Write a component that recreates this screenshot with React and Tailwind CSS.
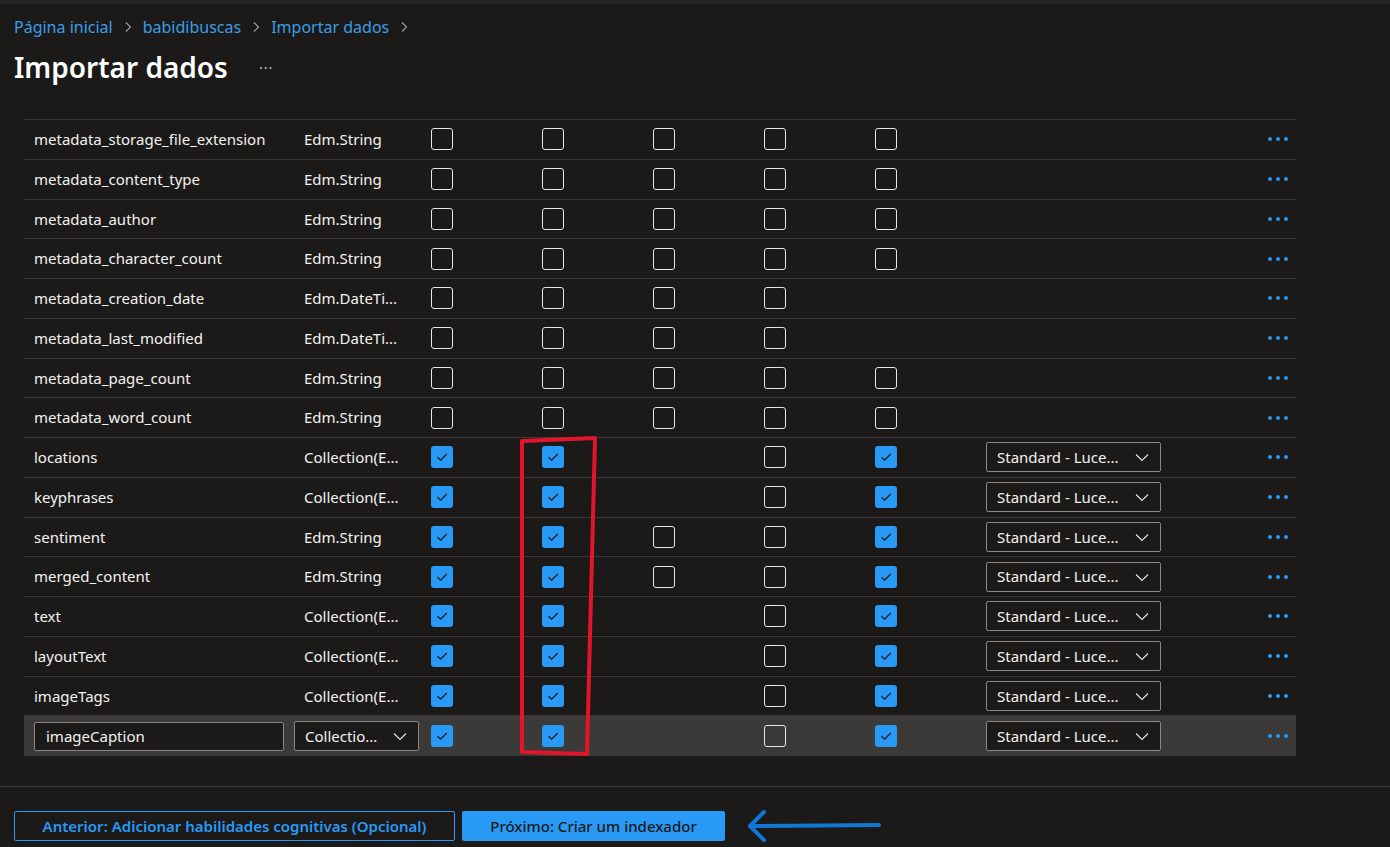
import React from 'react';

const rows = [
  { name: 'metadata_storage_file_extension', type: 'Edm.String', c: [0, 0, 0, 0, 0], an: false },
  { name: 'metadata_content_type', type: 'Edm.String', c: [0, 0, 0, 0, 0], an: false },
  { name: 'metadata_author', type: 'Edm.String', c: [0, 0, 0, 0, 0], an: false },
  { name: 'metadata_character_count', type: 'Edm.String', c: [0, 0, 0, 0, 0], an: false },
  { name: 'metadata_creation_date', type: 'Edm.DateTi...', c: [0, 0, 0, 0, null], an: false },
  { name: 'metadata_last_modified', type: 'Edm.DateTi...', c: [0, 0, 0, 0, null], an: false },
  { name: 'metadata_page_count', type: 'Edm.String', c: [0, 0, 0, 0, 0], an: false },
  { name: 'metadata_word_count', type: 'Edm.String', c: [0, 0, 0, 0, 0], an: false },
  { name: 'locations', type: 'Collection(E...', c: [1, 1, null, 0, 1], an: true },
  { name: 'keyphrases', type: 'Collection(E...', c: [1, 1, null, 0, 1], an: true },
  { name: 'sentiment', type: 'Edm.String', c: [1, 1, 0, 0, 1], an: true },
  { name: 'merged_content', type: 'Edm.String', c: [1, 1, 0, 0, 1], an: true },
  { name: 'text', type: 'Collection(E...', c: [1, 1, null, 0, 1], an: true },
  { name: 'layoutText', type: 'Collection(E...', c: [1, 1, null, 0, 1], an: true },
  { name: 'imageTags', type: 'Collection(E...', c: [1, 1, null, 0, 1], an: true },
  { name: 'imageCaption', type: 'Collectio...', c: [1, 1, null, 0, 1], an: true, edit: true },
];

function Chevron({ className = '' }) {
  return (
    <svg width="16" height="16" viewBox="0 0 16 16" className={className}>
      <path d="M2 5.5 L8 11.5 L14 5.5" fill="none" stroke="#e6e6e6" strokeWidth="1.1" />
    </svg>
  );
}

function Box({ v }) {
  if (v === null) return null;
  if (v) {
    return (
      <div className="w-[22px] h-[22px] rounded-[3px] bg-[#2899f5] flex items-center justify-center">
        <svg width="14" height="14" viewBox="0 0 14 14">
          <path d="M2.5 7.2 L5.6 10.2 L11.8 4" fill="none" stroke="#1b1a19" strokeWidth="1.3" />
        </svg>
      </div>
    );
  }
  return <div className="w-[22px] h-[22px] rounded-[3px] border border-[#e6e6e6]" />;
}

function Dropdown({ text, w }) {
  return (
    <div className={`${w} h-[30px] border border-[#8a8886] rounded-[2px] bg-[#1b1a19] flex items-center justify-between pl-[10px] pr-[10px]`}>
      <span className="text-[#f3f2f1]">{text}</span>
      <Chevron />
    </div>
  );
}

function Dots() {
  return (
    <div className="flex gap-[4px]">
      <span className="w-[4px] h-[4px] rounded-full bg-[#2899f5]" />
      <span className="w-[4px] h-[4px] rounded-full bg-[#2899f5]" />
      <span className="w-[4px] h-[4px] rounded-full bg-[#2899f5]" />
    </div>
  );
}

function Crumb() {
  return (
    <svg width="10" height="12" viewBox="0 0 10 12">
      <path d="M3 1.5 L7.5 6 L3 10.5" fill="none" stroke="#a19f9d" strokeWidth="1.1" />
    </svg>
  );
}

export default function App() {
  return (
    <div className="w-[1390px] h-[847px] bg-[#1b1a19] text-[#f3f2f1] text-[15px] overflow-hidden flex flex-col" style={{ fontFamily: '"Noto Sans", "Open Sans", sans-serif' }}>
      <div className="h-[4px] bg-[#262524] shrink-0" />

      {/* breadcrumb */}
      <div className="flex items-center gap-[10px] px-[14px] mt-[11px] h-[24px] text-[16px] text-[#3b9ee8]">
        <span>Página inicial</span>
        <Crumb />
        <span>babidibuscas</span>
        <Crumb />
        <span>Importar dados</span>
        <Crumb />
      </div>

      {/* title */}
      <div className="flex items-center px-[14px] mt-[11px] h-[34px]">
        <h1 className="text-[28px] font-semibold text-white leading-none">Importar dados</h1>
        <span className="ml-[31px] text-[14px] text-[#c8c6c4] tracking-[1px]">···</span>
      </div>

      {/* table */}
      <div className="relative mt-[35px] ml-[24px] w-[1272px] border-t border-[#3b3a39]">
        {rows.map((r, i) => (
          <div key={i} className={`h-[39.75px] flex items-center border-b border-[#3b3a39] ${r.edit ? 'bg-[#3b3a39] border-b-0' : ''}`}>
            {r.edit ? (
              <>
                <div className="w-[270px] pl-[10px] shrink-0">
                  <div className="w-[250px] h-[29px] border border-[#8a8886] rounded-[2px] bg-[#1b1a19] flex items-center pl-[11px]">imageCaption</div>
                </div>
                <div className="w-[126px] shrink-0">
                  <Dropdown text={r.type} w="w-[125px]" />
                </div>
              </>
            ) : (
              <>
                <div className="w-[270px] pl-[10px] shrink-0 whitespace-nowrap">{r.name}</div>
                <div className="w-[126px] shrink-0 pl-[10px] whitespace-nowrap">{r.type}</div>
              </>
            )}
            {r.c.map((v, j) => (
              <div key={j} className="w-[111px] shrink-0 pl-[11px] flex items-center">
                <Box v={v} />
              </div>
            ))}
            <div className="w-[240px] shrink-0 pl-[11px]">
              {r.an && <Dropdown text="Standard - Luce..." w="w-[175px]" />}
            </div>
            <div className="flex-1 flex justify-end pr-[8px]">
              <Dots />
            </div>
          </div>
        ))}

        <svg className="absolute left-[494px] top-[316px] pointer-events-none" width="84" height="322" viewBox="0 0 84 322">
          <path d="M4 5 L77 2 L69 318 L4 316 Z" fill="none" stroke="#e3152b" strokeWidth="4" strokeLinejoin="round" />
        </svg>
      </div>

      <div className="mt-[30px] border-t border-[#3b3a39]" />

      {/* footer buttons */}
      <div className="flex items-center px-[14px] mt-[21px] gap-[7px]">
        <button className="w-[441px] h-[30px] border border-[#2899f5] rounded-[2px] text-[#2899f5] font-semibold text-[15px]">
          Anterior: Adicionar habilidades cognitivas (Opcional)
        </button>
        <button className="w-[263px] h-[30px] bg-[#2899f5] rounded-[2px] text-[#1b1a19] font-medium text-[15px]">
          Próximo: Criar um indexador
        </button>
        <svg width="140" height="36" viewBox="0 0 140 36" className="ml-[12px]">
          <path d="M7 18 L135 17" fill="none" stroke="#0f78d4" strokeWidth="4" strokeLinecap="round" />
          <path d="M20 4 L6 18 L20 32" fill="none" stroke="#0f78d4" strokeWidth="4" strokeLinecap="round" strokeLinejoin="round" />
        </svg>
      </div>
    </div>
  );
}
